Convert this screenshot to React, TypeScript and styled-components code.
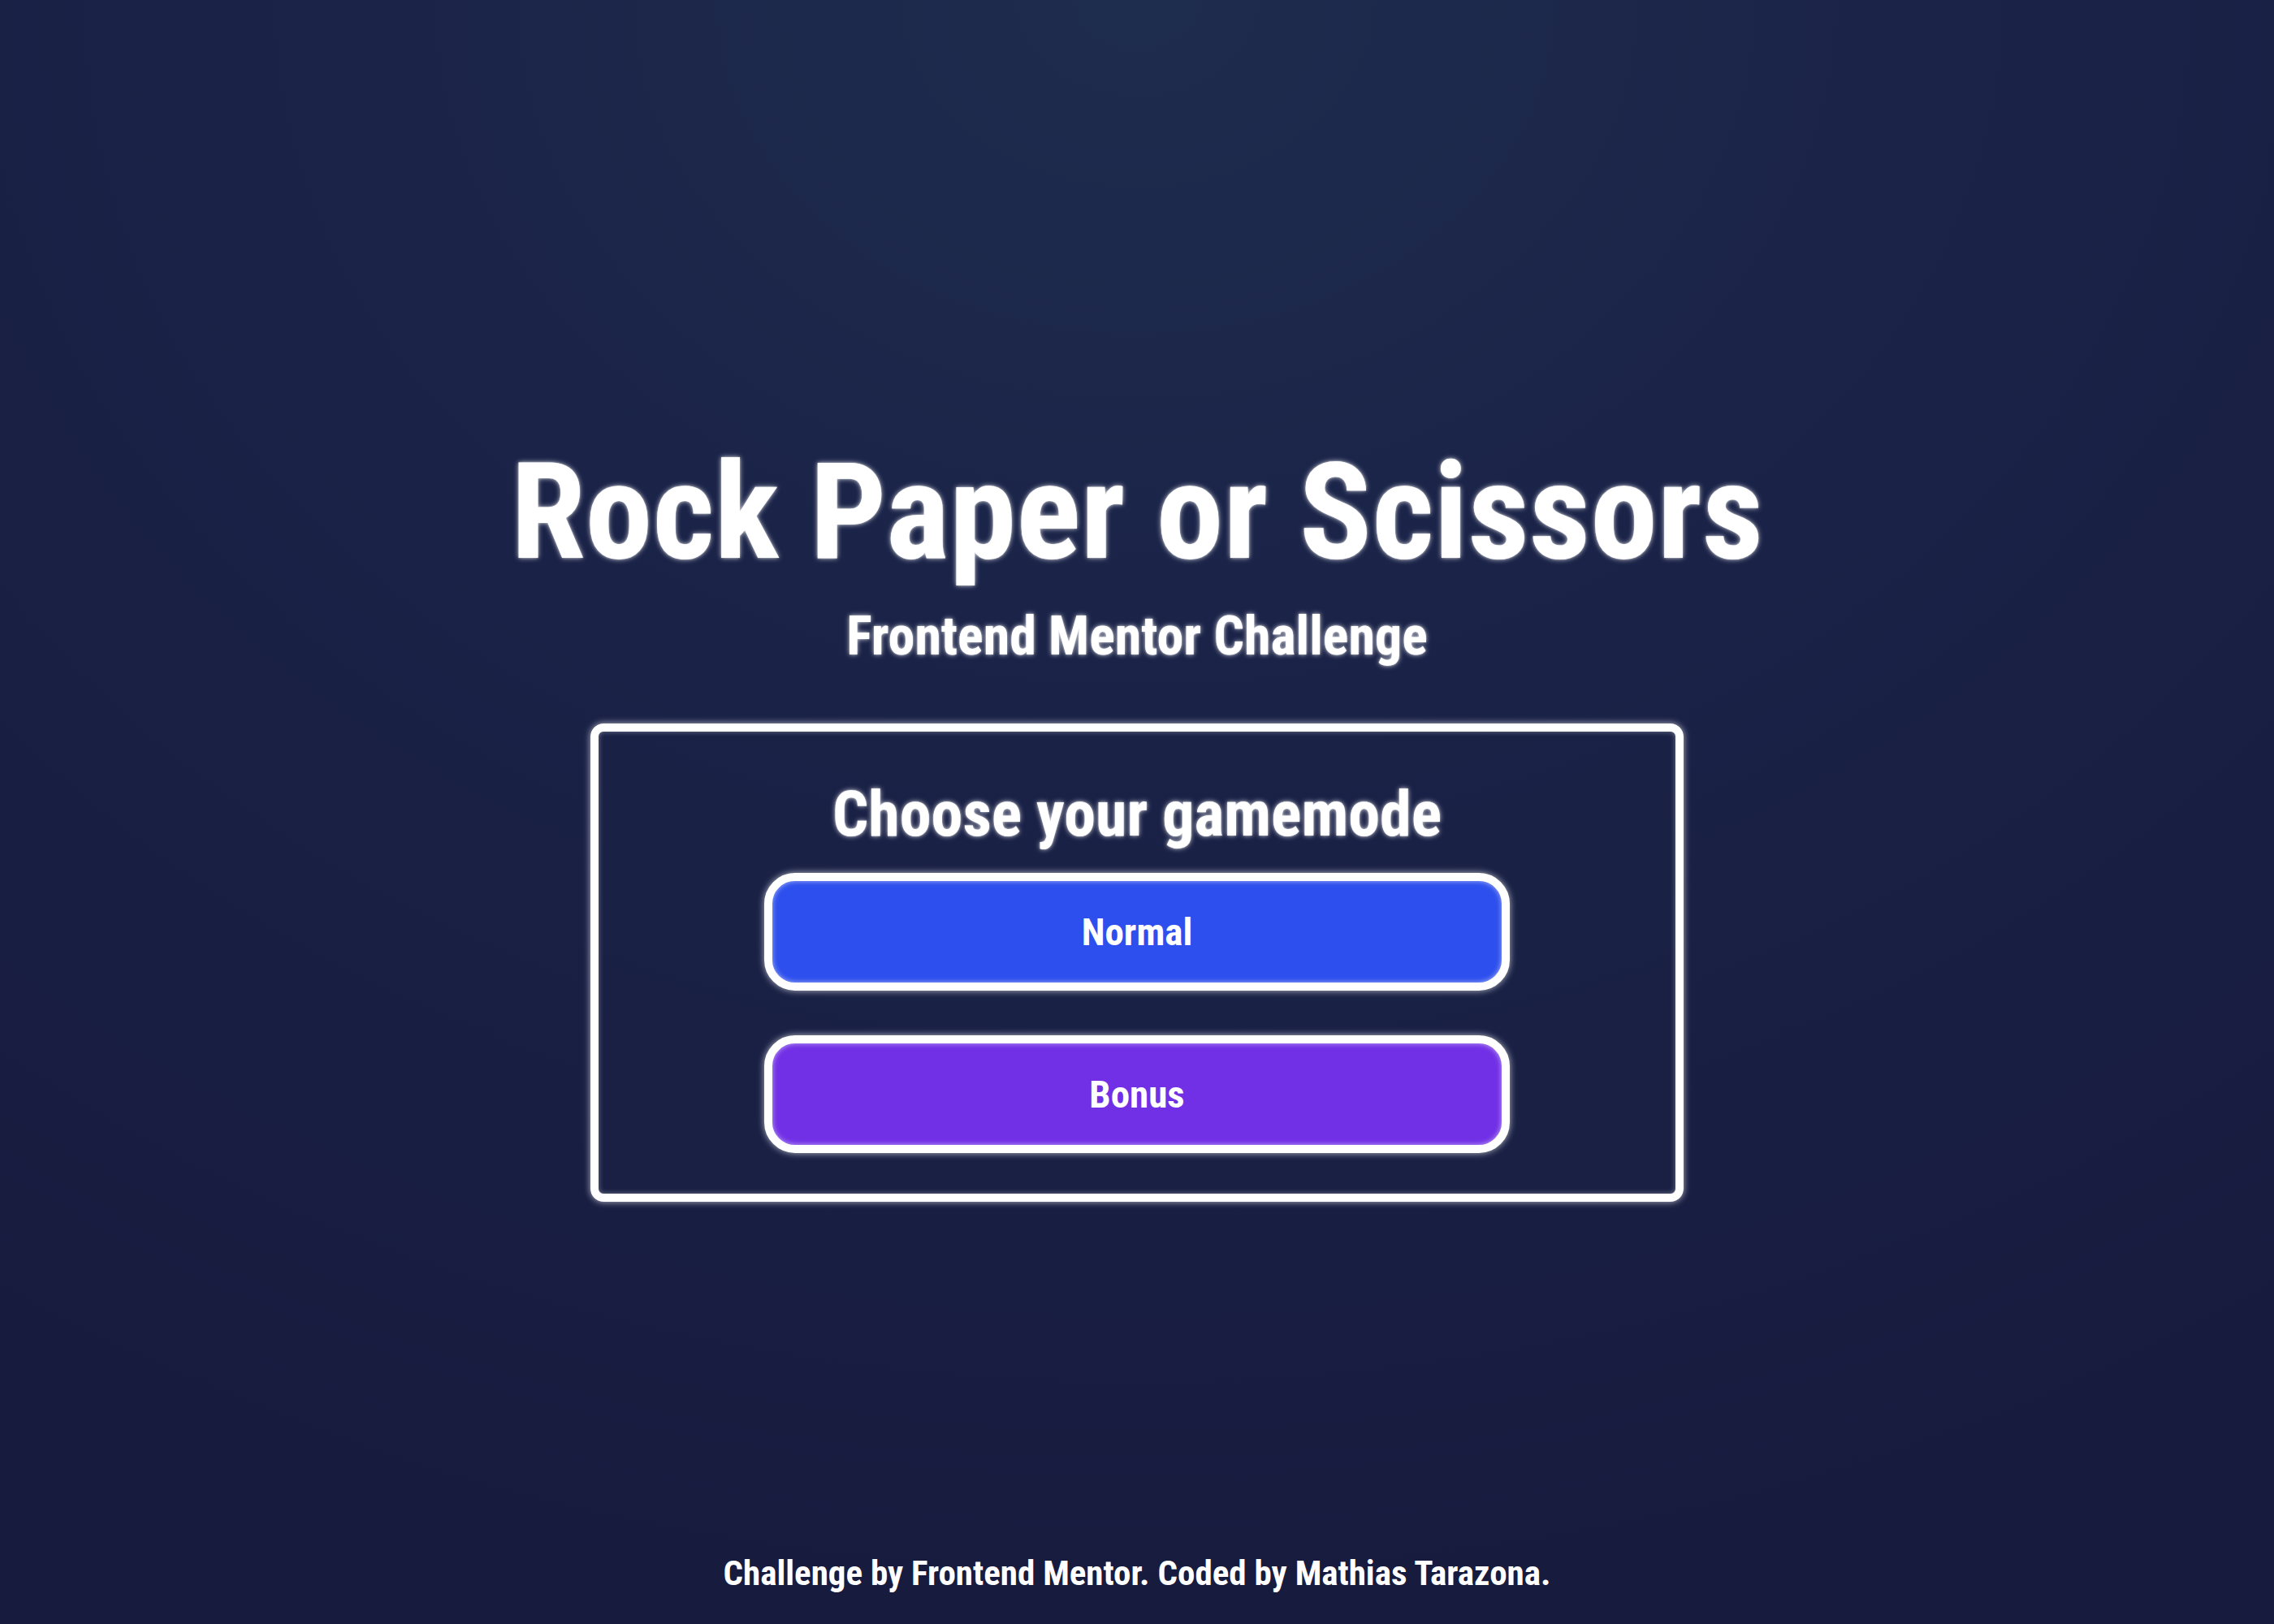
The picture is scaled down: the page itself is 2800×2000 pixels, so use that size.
import React from "react";
import styled, { createGlobalStyle } from "styled-components";

const Global = createGlobalStyle`
  html, body { margin: 0; padding: 0; }
  body {
    font-family: "Roboto Condensed", "Roboto", "Open Sans", sans-serif;
    font-stretch: 75%;
    color: #ffffff;
    background: #171b3e;
  }
`;

const Page = styled.div`
  min-height: 100vh;
  display: flex;
  flex-direction: column;
  align-items: center;
  background: radial-gradient(ellipse 90% 100% at 50% 0%, #1e2c4e 0%, #1a2247 45%, #171b3e 100%);
`;

const Main = styled.main`
  flex: 1;
  display: flex;
  flex-direction: column;
  align-items: center;
  padding-top: 548px;
`;

const glow = `text-shadow: 0 0 6px rgba(255, 255, 255, 0.75), 0 0 2px rgba(255, 255, 255, 0.6);`;

const Title = styled.h1`
  margin: 0;
  font-size: 166px;
  line-height: 1;
  font-weight: 700;
  ${glow}
`;

const Subtitle = styled.h2`
  margin: 37px 0 0;
  font-size: 66px;
  line-height: 1;
  font-weight: 700;
  ${glow}
`;

const Card = styled.section`
  margin-top: 74px;
  width: 1346px;
  box-sizing: border-box;
  border: 10px solid #ffffff;
  border-radius: 16px;
  padding: 63px 0 50px;
  display: flex;
  flex-direction: column;
  align-items: center;
  box-shadow: 0 0 8px rgba(255, 255, 255, 0.7), inset 0 0 6px rgba(255, 255, 255, 0.4);
  background: rgba(26, 34, 70, 0.5);
`;

const CardTitle = styled.h3`
  margin: 0;
  font-size: 78px;
  line-height: 1;
  font-weight: 700;
  ${glow}
`;

const Buttons = styled.div`
  margin-top: 33px;
  display: flex;
  flex-direction: column;
  gap: 55px;
`;

const ModeButton = styled.button<{ $bg: string }>`
  width: 918px;
  height: 145px;
  box-sizing: border-box;
  border: 10px solid #ffffff;
  border-radius: 38px;
  background: ${(p) => p.$bg};
  color: #ffffff;
  font-family: inherit;
  font-stretch: inherit;
  font-size: 47px;
  font-weight: 700;
  cursor: pointer;
  box-shadow: 0 0 8px rgba(255, 255, 255, 0.7), inset 0 0 6px rgba(255, 255, 255, 0.6);
`;

const Footer = styled.footer`
  padding: 0 0 41px;
  font-size: 43px;
  line-height: 1;
  font-weight: 700;
`;

export default function App() {
  return (
    <>
      <Global />
      <Page>
        <Main>
          <Title>Rock Paper or Scissors</Title>
          <Subtitle>Frontend Mentor Challenge</Subtitle>
          <Card>
            <CardTitle>Choose your gamemode</CardTitle>
            <Buttons>
              <ModeButton $bg="#2d4fed">Normal</ModeButton>
              <ModeButton $bg="#7130e6">Bonus</ModeButton>
            </Buttons>
          </Card>
        </Main>
        <Footer>Challenge by Frontend Mentor. Coded by Mathias Tarazona.</Footer>
      </Page>
    </>
  );
}
